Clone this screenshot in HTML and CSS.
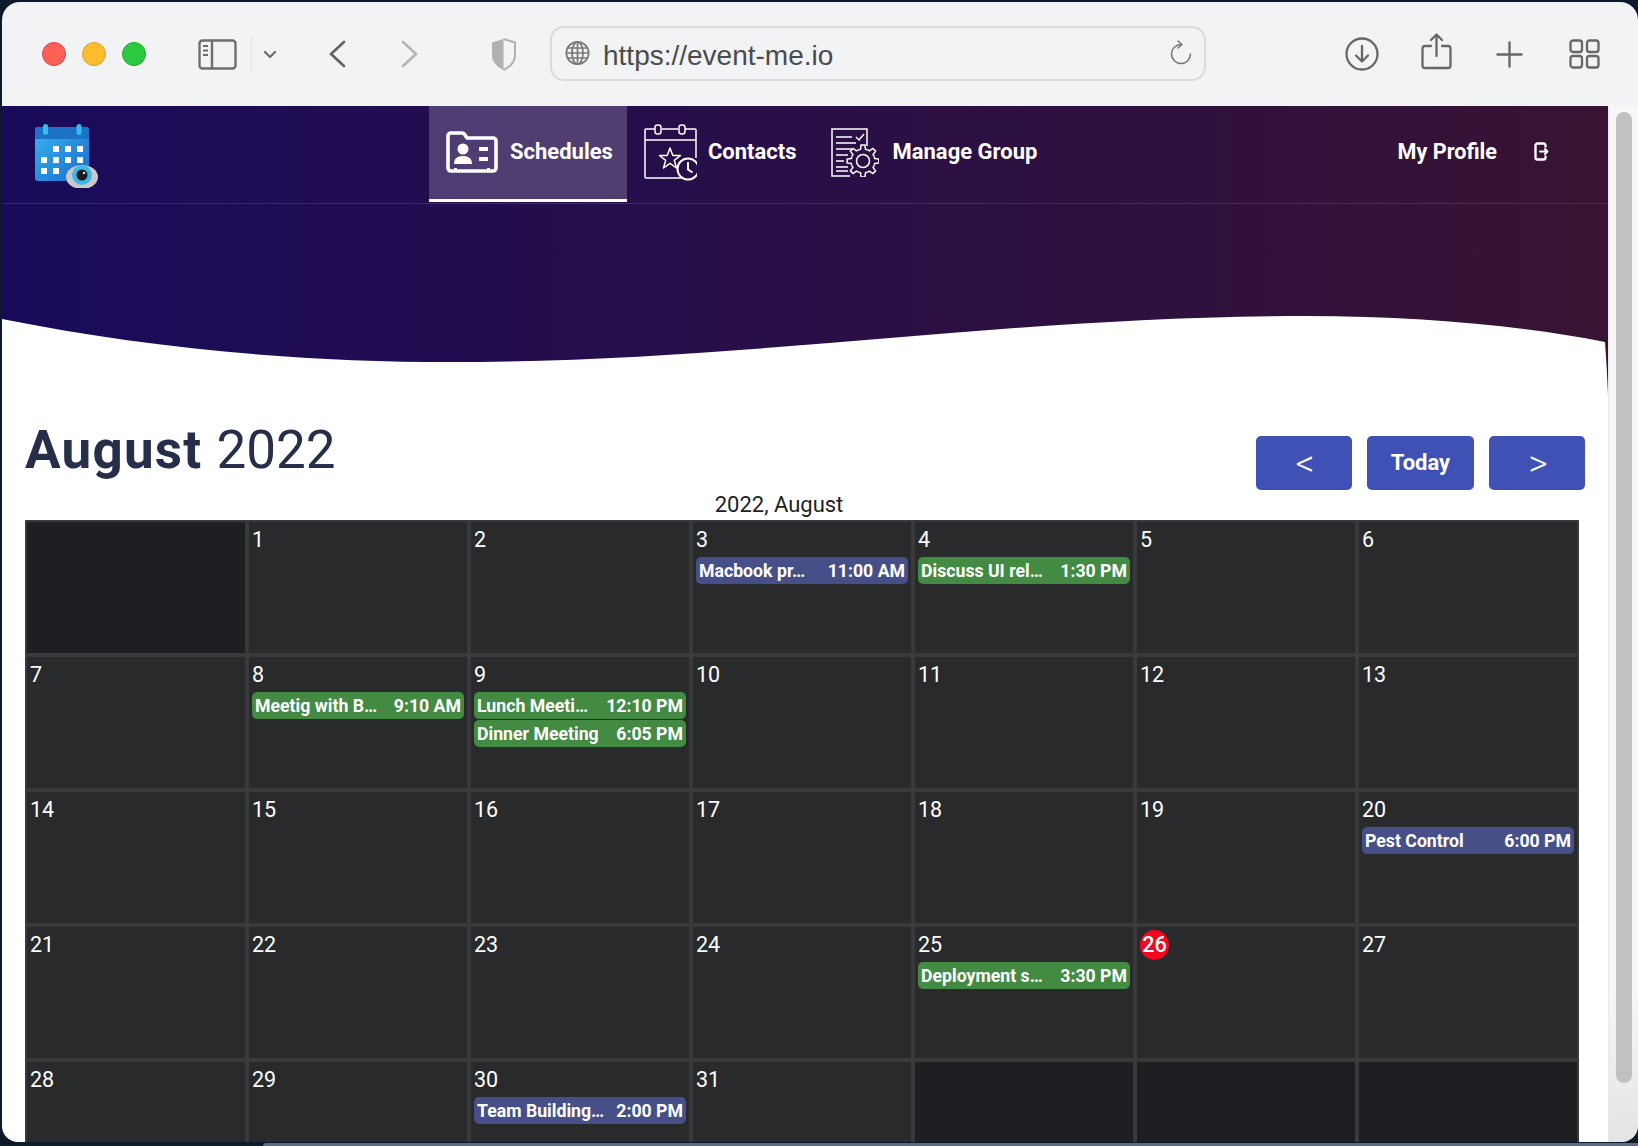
FILE: index.html
```html
<!DOCTYPE html>
<html lang="en">
<head>
    <meta charset="UTF-8">
    <meta name="viewport" content="width=device-width, initial-scale=1.0">
    <title>Event Me - Schedules</title>
    <link rel="stylesheet" href="styles.css">
</head>
<body>
    <div class="window">
        <!-- browser chrome -->
        <div class="toolbar">
            <span class="light light-red"></span>
            <span class="light light-yellow"></span>
            <span class="light light-green"></span>
            <svg class="ti ti-sidebar" width="39" height="31" viewBox="0 0 39 31" fill="none" stroke="#6d6e70" stroke-width="2.4"><rect x="1.5" y="1.5" width="36" height="28" rx="3"/><path d="M14 1.5v28"/><path d="M5 7h5M5 11.500h5M5 16h5" stroke-width="1.800"/></svg>
            <span class="ti-sep"></span>
            <svg class="ti ti-caret" width="14" height="9" viewBox="0 0 14 9" fill="none" stroke="#6d6e70" stroke-width="2.400" stroke-linecap="round" stroke-linejoin="round"><path d="M2 2l5 5 5-5"/></svg>
            <svg class="ti ti-back" width="17" height="28" viewBox="0 0 17 28" fill="none" stroke="#606163" stroke-width="2.600" stroke-linecap="round" stroke-linejoin="round"><path d="M15 2L2 14l13 12"/></svg>
            <svg class="ti ti-forward" width="17" height="28" viewBox="0 0 17 28" fill="none" stroke="#b4b5b7" stroke-width="2.600" stroke-linecap="round" stroke-linejoin="round"><path d="M2 2l13 12L2 26"/></svg>
            <svg class="ti ti-shield" width="27" height="33" viewBox="0 0 27 33" fill="none"><path d="M13.500 1L2 4.500v13c0 7 5.500 11.500 11.500 14.500z" fill="#b0b1b3"/><path d="M13.500 1L25 4.500v13c0 7-5.500 11.500-11.500 14.500" stroke="#b0b1b3" stroke-width="2"/></svg>
            <div class="address">
                <svg width="25" height="26" viewBox="0 0 25 26" fill="none" stroke="#77787a" stroke-width="1.700"><circle cx="12.500" cy="13" r="11.200"/><ellipse cx="12.500" cy="13" rx="5.500" ry="11.200"/><path d="M12.500 2v22M2.500 8h20M1.500 13h22M2.500 18h20"/></svg>
                <span class="url">https://event-me.io</span>
                <svg class="reload" width="22" height="25" viewBox="0 0 22 25" fill="none" stroke="#77787a" stroke-width="1.600" stroke-linecap="round" stroke-linejoin="round"><path d="M20.500 14a9.500 9.500 0 1 1-9.500-9.500"/><path d="M8 1l4 3.500L8 8"/></svg>
            </div>
            <svg class="ti ti-download" width="34" height="34" viewBox="0 0 34 34" fill="none" stroke="#666769" stroke-width="2.300" stroke-linecap="round" stroke-linejoin="round"><circle cx="17" cy="17" r="15.500"/><path d="M17 9v15M11 18.500l6 6 6-6"/></svg>
            <svg class="ti ti-share" width="31" height="37" viewBox="0 0 31 37" fill="none" stroke="#666769" stroke-width="2.300" stroke-linecap="round" stroke-linejoin="round"><path d="M10 13H4a2.500 2.500 0 0 0-2.500 2.500v17A2.500 2.500 0 0 0 4 35h23a2.500 2.500 0 0 0 2.500-2.500v-17A2.500 2.500 0 0 0 27 13h-6"/><path d="M15.500 23V2M10 7l5.500-5.500L21 7"/></svg>
            <svg class="ti ti-plus" width="27" height="27" viewBox="0 0 27 27" fill="none" stroke="#666769" stroke-width="2.400" stroke-linecap="round"><path d="M13.500 1.500v24M1.500 13.500h24"/></svg>
            <svg class="ti ti-tabs" width="31" height="30" viewBox="0 0 31 30" fill="none" stroke="#666769" stroke-width="2.300"><rect x="1.500" y="1.500" width="11.500" height="11.500" rx="2.500"/><rect x="18" y="1.500" width="11.500" height="11.500" rx="2.500"/><rect x="1.500" y="17" width="11.500" height="11.500" rx="2.500"/><rect x="18" y="17" width="11.500" height="11.500" rx="2.500"/></svg>
        </div>

        <div class="viewport">
            <div class="page">
                <header class="hero">
                    <nav class="nav">
                        <svg class="logo" width="66" height="66" viewBox="0 0 66 66">
                            <defs>
                                <linearGradient id="calBody" x1="0" y1="0" x2="1" y2="1">
                                    <stop offset="0" stop-color="#3ab4ee"/>
                                    <stop offset="1" stop-color="#176bd0"/>
                                </linearGradient>
                            </defs>
                            <rect x="2" y="5" width="54" height="54" rx="3" fill="url(#calBody)"/>
                            <path d="M2 17V8a3 3 0 0 1 3-3h48a3 3 0 0 1 3 3v9z" fill="#1b72c6"/>
                            <rect x="10" y="2" width="5" height="11" rx="2.500" fill="#35bdf0"/>
                            <rect x="43.500" y="2" width="5" height="11" rx="2.500" fill="#35bdf0"/>
                            <g fill="#fff">
                                <rect x="20" y="24" width="6" height="6"/><rect x="32" y="24" width="6" height="6"/><rect x="44" y="24" width="6" height="6"/>
                                <rect x="8" y="35" width="6" height="6"/><rect x="20" y="35" width="6" height="6"/><rect x="32" y="35" width="6" height="6"/><rect x="44" y="35" width="6" height="6"/>
                                <rect x="8" y="46" width="6" height="6"/><rect x="20" y="46" width="6" height="6"/>
                            </g>
                            <ellipse cx="49" cy="55" rx="16" ry="12" fill="#c9c9c9"/>
                            <circle cx="49" cy="53" r="10" fill="#3fb6e8"/>
                            <circle cx="49" cy="53" r="5.500" fill="#1a1a1c"/>
                            <circle cx="51" cy="51" r="1.300" fill="#d8d8d8"/>
                        </svg>
                        <div class="nav-links">
                            <a class="nav-item active">
                                <svg width="52" height="42" viewBox="0 0 52 42" fill="none" stroke="#fff" stroke-width="3.600"><path d="M2 5a3 3 0 0 1 3-3h11a3 3 0 0 1 2.500 1.300L21 7h26a3 3 0 0 1 3 3v27a3 3 0 0 1-3 3H5a3 3 0 0 1-3-3z" stroke-linejoin="round"/><g fill="#fff" stroke="none"><circle cx="17" cy="18" r="5.500"/><path d="M8 33c0-6 4-8 9-8s9 2 9 8z"/><rect x="33" y="16" width="9" height="4"/><rect x="33" y="26" width="9" height="4"/><rect x="8" y="37" width="3" height="3"/><rect x="41" y="37" width="3" height="3"/></g></svg>
                                <span>Schedules</span>
                            </a>
                            <a class="nav-item">
                                <svg width="53" height="57" viewBox="0 0 53 57" fill="none" stroke="#fff" stroke-width="1.500" stroke-linejoin="round"><path d="M37 54H2a1 1 0 0 1-1-1V6a1 1 0 0 1 1-1h9M18 5h16M41 5h10a1 1 0 0 1 1 1v28"/><rect x="11" y="1" width="6" height="9" rx="2.500"/><rect x="35" y="1" width="6" height="9" rx="2.500"/><path d="M1 16h51"/><path d="M26 24l2.800 7.500h7.700l-6.200 4.800 2.200 7.700-6.500-4.600-6.500 4.600 2.200-7.700-6.200-4.800h7.700z"/><circle cx="44" cy="45" r="10.500" stroke-width="2"/><path d="M44 38v7.500l4.500 3" stroke-width="2"/></svg>
                                <span>Contacts</span>
                            </a>
                            <a class="nav-item nav-manage">
                                <svg width="48" height="49" viewBox="0 0 48 49" fill="none" stroke="#fff" stroke-width="1.500"><path d="M19 48H1V1h35v17"/><path d="M5 9h16M5 15h20M5 21h16M5 27h12M5 33h8M5 39h12M5 43h12"/><path d="M25 9l3 3 5-6"/><g transform="translate(32 33)"><g id="gearTeeth"><path d="M11.090-4.590L11.740-2.490 15.880-1.950 15.880 1.950 11.740 2.490 11.090 4.590"/></g><use href="#gearTeeth" transform="rotate(45)"/><use href="#gearTeeth" transform="rotate(90)"/><use href="#gearTeeth" transform="rotate(135)"/><use href="#gearTeeth" transform="rotate(180)"/><use href="#gearTeeth" transform="rotate(225)"/><use href="#gearTeeth" transform="rotate(270)"/><use href="#gearTeeth" transform="rotate(315)"/><circle r="6.500"/></g></svg>
                                <span>Manage Group</span>
                            </a>
                        </div>
                        <div class="nav-right">
                            <a class="profile">My Profile</a>
                            <svg width="15" height="19" viewBox="0 0 15 19" fill="none" stroke="#fff" stroke-width="2.400" stroke-linecap="round" stroke-linejoin="round"><path d="M11.500 4.500V3.500a2 2 0 0 0-2-2h-6a2 2 0 0 0-2 2v12a2 2 0 0 0 2 2h6a2 2 0 0 0 2-2v-1"/><path d="M6 9.500h7.500M11 7l2.500 2.500L11 12" stroke-width="2"/></svg>
                        </div>
                    </nav>
                    <svg class="wave" width="1606" height="191" viewBox="0 0 1606 191"><path d="M0 115C150 145 300 158 448 158C750 158 1000 112 1304 112C1420 112 1520 122 1603 138Q1605 165 1606 191L0 191Z" fill="#fff"/></svg>
                </header>

                <main class="content">
                    <div class="title-row">
                        <h1><b>August</b> 2022</h1>
                        <div class="cal-buttons">
                            <button class="cal-btn cal-arrow">&lt;</button>
                            <button class="cal-btn cal-today">Today</button>
                            <button class="cal-btn cal-arrow">&gt;</button>
                        </div>
                    </div>
                    <div class="caption">2022, August</div>
                    <div class="calendar">
                        <div class="day empty"></div>
                        <div class="day"><span class="num">1</span></div>
                        <div class="day"><span class="num">2</span></div>
                        <div class="day"><span class="num">3</span><div class="event blue"><span>Macbook pr…</span><span>11:00 AM</span></div></div>
                        <div class="day"><span class="num">4</span><div class="event green"><span>Discuss UI rel…</span><span>1:30 PM</span></div></div>
                        <div class="day"><span class="num">5</span></div>
                        <div class="day"><span class="num">6</span></div>

                        <div class="day"><span class="num">7</span></div>
                        <div class="day"><span class="num">8</span><div class="event green"><span>Meetig with B…</span><span>9:10 AM</span></div></div>
                        <div class="day"><span class="num">9</span><div class="event green"><span>Lunch Meeti…</span><span>12:10 PM</span></div><div class="event green"><span>Dinner Meeting</span><span>6:05 PM</span></div></div>
                        <div class="day"><span class="num">10</span></div>
                        <div class="day"><span class="num">11</span></div>
                        <div class="day"><span class="num">12</span></div>
                        <div class="day"><span class="num">13</span></div>

                        <div class="day"><span class="num">14</span></div>
                        <div class="day"><span class="num">15</span></div>
                        <div class="day"><span class="num">16</span></div>
                        <div class="day"><span class="num">17</span></div>
                        <div class="day"><span class="num">18</span></div>
                        <div class="day"><span class="num">19</span></div>
                        <div class="day"><span class="num">20</span><div class="event blue"><span>Pest Control</span><span>6:00 PM</span></div></div>

                        <div class="day"><span class="num">21</span></div>
                        <div class="day"><span class="num">22</span></div>
                        <div class="day"><span class="num">23</span></div>
                        <div class="day"><span class="num">24</span></div>
                        <div class="day"><span class="num">25</span><div class="event green"><span>Deployment s…</span><span>3:30 PM</span></div></div>
                        <div class="day"><span class="num today">26</span></div>
                        <div class="day"><span class="num">27</span></div>

                        <div class="day"><span class="num">28</span></div>
                        <div class="day"><span class="num">29</span></div>
                        <div class="day"><span class="num">30</span><div class="event blue"><span>Team Building…</span><span>2:00 PM</span></div></div>
                        <div class="day"><span class="num">31</span></div>
                        <div class="day empty"></div>
                        <div class="day empty"></div>
                        <div class="day empty"></div>
                    </div>
                </main>
            </div>
            <div class="scrollbar"><div class="thumb"></div></div>
        </div>
    </div>
    <div class="dock"></div>
</body>
</html>
```

FILE: styles.css
```css
html, body {
    height: 100%;
}
body {
    margin: 0;
    overflow: hidden;
    background: #0c1a2c;
    font-family: 'Roboto', sans-serif;
    color: #fff;
}
.window {
    width: 1636px;
    height: 1140px;
    margin: 2px 0 1px 2px;
    border-radius: 18px 18px 16px 16px;
    overflow: hidden;
    display: flex;
    flex-direction: column;
}
.dock {
    height: 3px;
    margin-left: 263px;
    background: #5e6a80;
    border-top-left-radius: 3px;
}

/* browser toolbar */
.toolbar {
    flex: none;
    height: 104px;
    background: #f2f3f5;
    display: flex;
    align-items: center;
}
.light {
    width: 24px;
    height: 24px;
    border-radius: 50%;
    margin-right: 16px;
    box-sizing: border-box;
}
.light-red {
    margin-left: 40px;
    background: #fe5f57;
    border: 1px solid #e0443e;
}
.light-yellow {
    background: #febc2e;
    border: 1px solid #dea123;
}
.light-green {
    background: #2bc840;
    border: 1px solid #1dad2b;
}
.ti {
    flex: none;
}
.ti-sidebar {
    margin-left: 36px;
}
.ti-sep {
    width: 1px;
    height: 36px;
    margin-left: 14px;
    background: #dfe0e2;
}
.ti-caret {
    margin-left: 11px;
}
.ti-back {
    margin-left: 52px;
    margin-bottom: 1px;
}
.ti-forward {
    margin-left: 55px;
    margin-bottom: 1px;
}
.ti-shield {
    margin-left: 72px;
}
.address {
    flex: none;
    width: 656px;
    height: 55px;
    margin-left: 33px;
    margin-bottom: 1px;
    box-sizing: border-box;
    border: 2px solid #d9dbdd;
    border-radius: 14px;
    display: flex;
    align-items: center;
    padding: 0 12px 2px 13px;
}
.url {
    margin-left: 13px;
    padding-top: 7px;
    font-family: 'Liberation Sans', sans-serif;
    font-size: 28px;
    color: #4b4b4e;
}
.reload {
    margin-left: auto;
}
.ti-download {
    margin-left: 139px;
}
.ti-share {
    margin-left: 42px;
    margin-bottom: 5px;
}
.ti-plus {
    margin-left: 44px;
}
.ti-tabs {
    margin-left: 46px;
}

/* page area */
.viewport {
    flex: 1;
    min-height: 0;
    display: flex;
}
.page {
    flex: 1;
    min-width: 0;
    background: #fff;
    overflow: hidden;
}
.scrollbar {
    flex: none;
    width: 30px;
    box-sizing: border-box;
    padding: 6px 6px 0 7px;
    background: linear-gradient(#f7f7f8 85%, #e4e4e4);
    border-left: 1px solid #e9e9e9;
}
.thumb {
    height: 971px;
    border-radius: 8px;
    background: #c1c1c1;
}

/* header */
.hero {
    height: 289px;
    background: linear-gradient(90deg, #190b5b, #381333);
    display: flex;
    flex-direction: column;
}
.nav {
    height: 97px;
    border-bottom: 1px solid rgba(255, 255, 255, 0.12);
    display: flex;
}
.logo {
    margin: 16px 0 0 31px;
}
.nav-links {
    display: flex;
    margin-left: 330px;
}
.nav-item {
    height: 96px;
    box-sizing: border-box;
    padding: 0 17px 6px;
    display: flex;
    align-items: center;
    gap: 11px;
    font-size: 22px;
    font-weight: 700;
}
.nav-item svg {
    margin-top: 2px;
}
.nav-item.active {
    gap: 12px;
    padding: 0 14px 3px 17px;
    background: rgba(255, 255, 255, 0.2);
    border-bottom: 3px solid #fff;
}
.nav-manage {
    gap: 14px;
}
.nav-right {
    margin-left: auto;
    padding: 0 59px 7px 0;
    display: flex;
    align-items: center;
    gap: 37px;
    font-size: 21.600px;
    font-weight: 700;
}
.wave {
    display: block;
}

/* calendar */
.content {
    padding: 41px 23px 0 23px;
    color: #252f4a;
}
.title-row {
    display: flex;
    justify-content: space-between;
    align-items: flex-start;
    height: 54px;
}
h1 {
    margin: -17px 0 0;
    font-size: 53px;
    line-height: 62px;
    font-weight: 400;
}
h1 b {
    margin-right: 1px;
    font-weight: 700;
    letter-spacing: 1.200px;
}
.cal-buttons {
    display: flex;
    gap: 15px;
}
.cal-btn {
    height: 54px;
    border: none;
    border-radius: 5px;
    background: #3f51b5;
    color: #fff;
    font-family: 'Roboto', sans-serif;
    padding: 0;
}
.cal-arrow {
    width: 96px;
    padding-left: 2px;
    font-size: 37px;
    font-weight: 300;
}
.cal-today {
    width: 107px;
    padding-bottom: 2px;
    font-size: 22px;
    font-weight: 700;
}
.caption {
    width: 1508px;
    height: 30px;
    line-height: 30px;
    text-align: center;
    font-size: 22px;
    color: #222;
}
.calendar {
    width: 1554px;
    box-sizing: border-box;
    padding: 2px;
    display: grid;
    grid-template-columns: repeat(7, 218px);
    grid-auto-rows: 131px;
    gap: 4px;
    background: #3a3a3c;
}
.day {
    background: #292a2c;
    color: #fff;
    padding: 3px;
    font-size: 21.500px;
    line-height: 29px;
}
.day.empty {
    background: #1e1f22;
}
.num {
    display: block;
    height: 32px;
}
.num.today {
    width: 29px;
    height: 30px;
    margin: 0 0 2px 0;
    border-radius: 50%;
    background: #f5071f;
    text-align: center;
    font-weight: 500;
}
.event {
    box-sizing: border-box;
    height: 27px;
    margin-bottom: 1px;
    padding: 2px 3px 0;
    border-radius: 5px;
    display: flex;
    justify-content: space-between;
    align-items: center;
    font-size: 17.700px;
    font-weight: 700;
    line-height: 25px;
    white-space: nowrap;
}
.green {
    background: #438a43;
}
.blue {
    background: #474f88;
}
```
